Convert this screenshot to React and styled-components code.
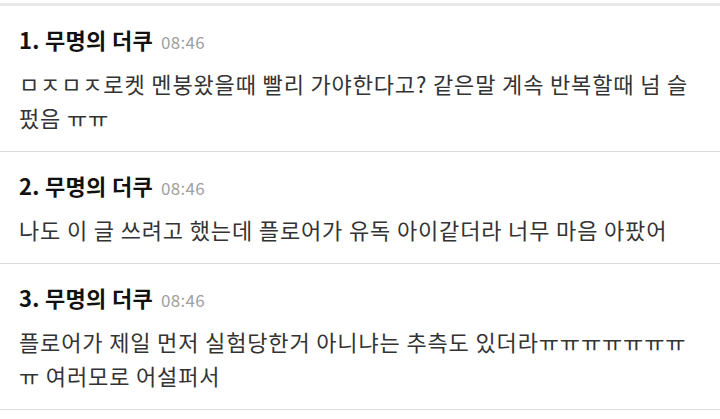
import React from "react";
import styled, { createGlobalStyle } from "styled-components";

const Global = createGlobalStyle`
  html, body { margin: 0; padding: 0; background: #ffffff; }
  body { font-family: "Noto Sans CJK KR", "Noto Sans", sans-serif; }
`;

const List = styled.div`
  width: 720px;
  padding-top: 3px;
  background: #fff;
`;

const TopBar = styled.div`
  height: 3px;
  background: #e8e8e8;
`;

const Card = styled.article`
  padding: 18px 26px 17px 19px;
  border-bottom: 1px solid #dcdcdc;
`;

const Header = styled.div`
  display: flex;
  align-items: baseline;
  gap: 8px;
  height: 30px;
  line-height: 30px;
`;

const Author = styled.span`
  font-size: 22px;
  font-weight: 700;
  letter-spacing: 0.3px;
  color: #111;
`;

const Time = styled.span`
  font-size: 17px;
  letter-spacing: 0.3px;
  color: #a0a0a0;
`;

const Body = styled.p`
  margin: 12px 0 0;
  font-size: 22px;
  letter-spacing: 0.85px;
  line-height: 34px;
  color: #333;
`;

const comments = [
  { n: 1, time: "08:46", text: "ㅁㅈㅁㅈ로켓 멘붕왔을때 빨리 가야한다고? 같은말 계속 반복할때 넘 슬펐음 ㅠㅠ" },
  { n: 2, time: "08:46", text: "나도 이 글 쓰려고 했는데 플로어가 유독 아이같더라 너무 마음 아팠어" },
  { n: 3, time: "08:46", text: "플로어가 제일 먼저 실험당한거 아니냐는 추측도 있더라ㅠㅠㅠㅠㅠㅠㅠㅠ 여러모로 어설퍼서" },
];

export default function App() {
  return (
    <>
      <Global />
      <List>
        <TopBar />
        {comments.map((c) => (
          <Card key={c.n}>
            <Header>
              <Author>{c.n}. 무명의 더쿠</Author>
              <Time>{c.time}</Time>
            </Header>
            <Body>{c.text}</Body>
          </Card>
        ))}
      </List>
    </>
  );
}
